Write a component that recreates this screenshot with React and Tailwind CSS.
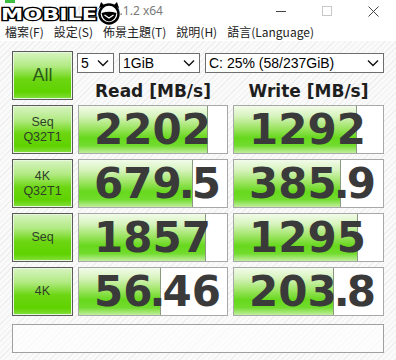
import React from "react";

const rows = [
  { l1: "Seq", l2: "Q32T1", r: "2202", rw: 129, w: "1292", ww: 123 },
  { l1: "4K", l2: "Q32T1", r: "679.5", rw: 114, w: "385.9", ww: 107 },
  { l1: "Seq", l2: null, r: "1857", rw: 127, w: "1295", ww: 124 },
  { l1: "4K", l2: null, r: "56.46", rw: 82, w: "203.8", ww: 100 },
];

function Chevron() {
  return (
    <svg width="12" height="8" viewBox="0 0 12 8" className="shrink-0">
      <polyline points="1,1.5 6,6.5 11,1.5" fill="none" stroke="#111" strokeWidth="1.4" />
    </svg>
  );
}

function Select({ className, text }) {
  return (
    <div className={"h-[20px] bg-white border border-[#6e6e6e] flex items-center pl-[3px] pr-[4px] text-[14px] text-black leading-none " + className}>
      <span className="flex-1 whitespace-nowrap">{text}</span>
      <Chevron />
    </div>
  );
}

function LabelButton({ children }) {
  return (
    <div className="h-[49px] border border-[#5a5a5a] shadow-[inset_0_0_0_1px_#e8f8dc] bg-[linear-gradient(to_bottom,#d8f4c2_0%,#b2ea84_30%,#6cd612_58%,#5fd200_85%,#86e040_100%)] flex flex-col items-center justify-center text-[#2f3f28] leading-[15px]">
      {children}
    </div>
  );
}

function Value({ value }) {
  const i = value.indexOf(".");
  if (i < 0) return <>{value}</>;
  return (
    <>
      {value.slice(0, i - 1)}
      <span className="tracking-[-3px]">{value.slice(i - 1, i + 1)}</span>
      {value.slice(i + 1)}
    </>
  );
}

function Cell({ value, fill }) {
  return (
    <div className="relative h-[49px] bg-white border border-[#a8a8a8] shadow-[inset_0_0_0_1px_#ffffff] overflow-hidden">
      <div
        className="absolute left-0 top-0 bottom-0 border-r border-[#8a9a80] bg-[linear-gradient(to_bottom,#f2fbea_0%,#d6f3bc_22%,#9be460_48%,#66d81c_68%,#72dc2e_84%,#c2eea0_100%)]"
        style={{ width: fill }}
      />
      <div className="relative pl-[15px] text-[42px] leading-[47px] font-bold text-[#3a3a3a] font-['DejaVu_Sans',sans-serif] whitespace-nowrap">
        <Value value={value} />
      </div>
    </div>
  );
}

function Logo() {
  return (
    <svg width="122" height="26" viewBox="0 0 122 26" className="absolute left-0 top-0">
      <rect x="0" y="5" width="98" height="17" fill="#ffffff" fillOpacity="0.8" />
      <text
        x="1"
        y="20"
        fontFamily="DejaVu Sans, sans-serif"
        fontWeight="bold"
        fontSize="16"
        textLength="96"
        lengthAdjust="spacingAndGlyphs"
        fill="#ffffff"
        stroke="#000"
        strokeWidth="2.6"
        paintOrder="stroke"
      >
        MOBILE
      </text>
      <polygon points="99,8 101,2 105,6" fill="#000" />
      <polygon points="119,8 117,2 113,6" fill="#000" />
      <circle cx="109" cy="14" r="9.5" fill="#fff" stroke="#000" strokeWidth="2.4" />
      <path d="M101.5,13 Q109,10.5 116.5,13 Q115,21 109,21.5 Q103,21 101.5,13 Z" fill="#000" />
      <path d="M104.5,15 L109,18 L113.5,15" fill="none" stroke="#fff" strokeWidth="1.3" />
    </svg>
  );
}

export default function App() {
  return (
    <div className="w-[396px] h-[360px] overflow-hidden bg-white font-['Liberation_Sans',sans-serif]">
      {/* title bar */}
      <div className="relative h-[22px] flex items-center bg-white">
        <div className="absolute left-[5px] top-0 w-[10px] h-[3px] bg-[#3fbf3f]" />
        <span className="ml-[8px] text-[12px] text-[#7a7a7a] font-['Noto_Sans',sans-serif] whitespace-nowrap">
          CrystalDiskMark 7.0.1.2 x64
        </span>
        <Logo />
        <div className="ml-auto flex items-center h-full">
          <div className="w-[46px] h-full flex items-center justify-center">
            <div className="w-[10px] h-px bg-[#444]" />
          </div>
          <div className="w-[46px] h-full flex items-center justify-center">
            <div className="w-[10px] h-[10px] border border-[#c8c8c8]" />
          </div>
          <div className="w-[46px] h-full flex items-center justify-center">
            <svg width="11" height="11" viewBox="0 0 11 11">
              <path d="M0.5,0.5 L10.5,10.5 M10.5,0.5 L0.5,10.5" stroke="#444" strokeWidth="1" />
            </svg>
          </div>
        </div>
      </div>
      {/* menu bar */}
      <div className="h-[19px] flex items-center gap-[10px] pl-[5px] text-[12px] text-[#222] bg-white font-['Noto_Sans_CJK_TC',sans-serif] leading-none">
        <span>檔案(F)</span>
        <span>設定(S)</span>
        <span>佈景主題(T)</span>
        <span>說明(H)</span>
        <span>語言(Language)</span>
      </div>
      {/* main */}
      <div className="h-[319px] pt-[10px] px-[12px] bg-[repeating-linear-gradient(135deg,#efefef_0px,#efefef_1px,#fafafa_1px,#fafafa_4px)]">
        <div className="grid grid-cols-[61px_150px_151px] gap-x-[5px] gap-y-[5px]">
          <LabelButton>
            <span className="text-[18px] text-[#2c5a18]">All</span>
          </LabelButton>
          <div className="col-span-2 h-[48px] flex flex-col">
            <div className="mt-[2px] flex gap-[5px] -ml-[1px]">
              <Select className="w-[37px]" text="5" />
              <Select className="w-[81px]" text="1GiB" />
              <Select className="flex-1" text="C: 25% (58/237GiB)" />
            </div>
            <div className="mt-[10px] grid grid-cols-[150px_151px] gap-x-[5px] text-[17px] leading-[17px] font-bold text-[#1e1e1e] font-['DejaVu_Sans',sans-serif]">
              <div className="text-center">Read [MB/s]</div>
              <div className="text-center">Write [MB/s]</div>
            </div>
          </div>
          {rows.map((r, i) => (
            <React.Fragment key={i}>
              <LabelButton>
                <span className="text-[12.5px]">{r.l1}</span>
                {r.l2 && <span className="text-[12.5px]">{r.l2}</span>}
              </LabelButton>
              <Cell value={r.r} fill={r.rw} />
              <Cell value={r.w} fill={r.ww} />
            </React.Fragment>
          ))}
        </div>
        <div className="mt-[8px] h-[29px] border border-[#a0a0a0] bg-white/60" />
      </div>
    </div>
  );
}
